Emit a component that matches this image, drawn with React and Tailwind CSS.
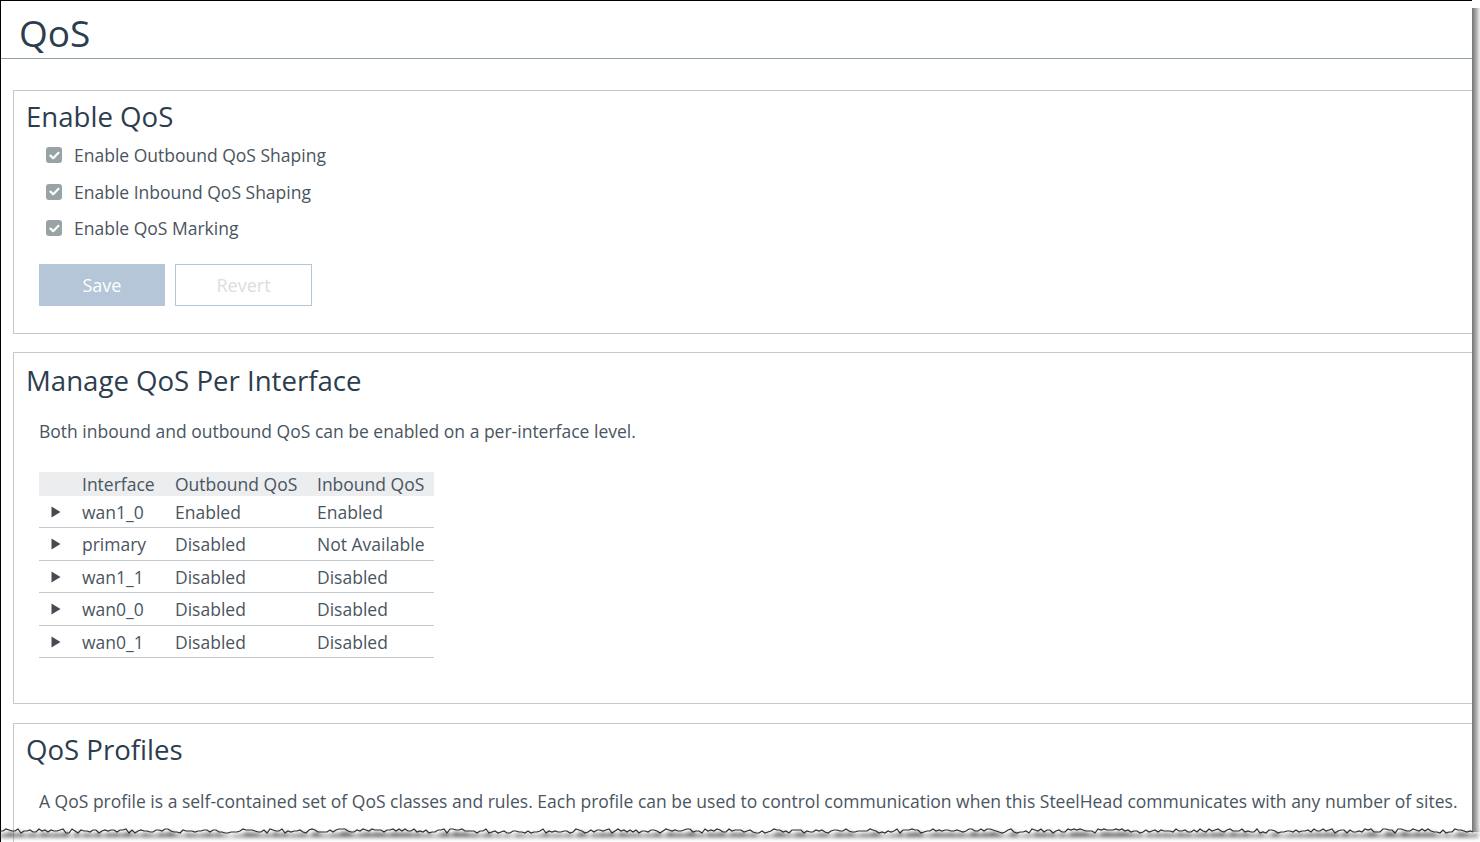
import React from 'react';

const font = { fontFamily: '"Open Sans", "Noto Sans", sans-serif' };

const rows = [
  ['wan1_0', 'Enabled', 'Enabled'],
  ['primary', 'Disabled', 'Not Available'],
  ['wan1_1', 'Disabled', 'Disabled'],
  ['wan0_0', 'Disabled', 'Disabled'],
  ['wan0_1', 'Disabled', 'Disabled'],
];

// jagged "torn paper" edge along the bottom
const tornPoints = (() => {
  let s = 7;
  const rnd = () => {
    s = (s * 9301 + 49297) % 233280;
    return s / 233280;
  };
  const pts = [];
  for (let x = 0; x <= 1474; x += 3) {
    pts.push([x, 9 + Math.round((rnd() - 0.5) * 4)]);
  }
  return pts;
})();

const Checkbox = () => (
  <span className="w-4 h-4 rounded-[3px] bg-[#97a3a5] flex items-center justify-center shrink-0">
    <svg width="11" height="9" viewBox="0 0 11 9" fill="none">
      <path d="M1.5 4.6 L4.2 7.2 L9.5 1.8" stroke="white" strokeWidth="2.2" strokeLinecap="round" strokeLinejoin="round" />
    </svg>
  </span>
);

const Arrow = () => (
  <svg width="10" height="12" viewBox="0 0 10 12">
    <path d="M0.5 0.5 L9.5 6 L0.5 11.5 Z" fill="#464b51" />
  </svg>
);

const Section = ({ title, children, className = '' }) => (
  <div className={`ml-3 -mr-4 border border-[#c3c8c8] ${className}`}>
    <h2 className="pl-3 text-[27.6px] leading-[38px] text-[#2c3d4e]">{title}</h2>
    {children}
  </div>
);

export default function App() {
  const torn = tornPoints.map(([x, y]) => `${x},${y}`).join(' ');
  return (
    <div className="w-[1480px] h-[842px] bg-white relative overflow-hidden text-[#4a5560]" style={font}>
      <div className="flex">
        <div className="w-[1472px] h-[842px] border-l border-t border-black overflow-hidden bg-white">
          <div className="h-[58px] border-b border-[#8fa29e] pl-[18px] pt-[7px]">
            <h1 className="text-[37px] leading-[49px] text-[#2c3d4e]">QoS</h1>
          </div>

          <Section title="Enable QoS" className="mt-[31px] pt-[6px] pb-[27px]">
            <div className="pl-[32px] pt-[2px]">
              {['Enable Outbound QoS Shaping', 'Enable Inbound QoS Shaping', 'Enable QoS Marking'].map((t) => (
                <div key={t} className="h-[36.5px] flex items-center gap-[12px] text-[17.5px]">
                  <Checkbox />
                  <span>{t}</span>
                </div>
              ))}
            </div>
            <div className="flex gap-[10px] pl-[25px] mt-[17px]">
              <button className="w-[126px] h-[42px] pt-[2px] bg-[#b4c6d7] text-white text-[18px]">Save</button>
              <button className="w-[137px] h-[42px] pt-[2px] border border-[#b4c6d7] text-[#d9dee1] text-[18px]">Revert</button>
            </div>
          </Section>

          <Section title="Manage QoS Per Interface" className="mt-[18px] pt-[8px] pb-[45px]">
            <p className="pl-[25px] mt-[20px] text-[17.5px] leading-6">
              Both inbound and outbound QoS can be enabled on a per-interface level.
            </p>
            <div className="ml-[25px] mt-[29px] w-[395px] text-[17.5px]">
              <div className="grid grid-cols-[43px_93px_142px_117px] h-6 items-center bg-[#ebedef] leading-6">
                <span />
                <span>Interface</span>
                <span>Outbound QoS</span>
                <span>Inbound QoS</span>
              </div>
              {rows.map(([a, b, c]) => (
                <div key={a} className="grid grid-cols-[43px_93px_142px_117px] h-[32.5px] pt-[1px] items-center border-b border-[#c4c9ce]">
                  <span className="pl-[12px] flex items-center"><Arrow /></span>
                  <span>{a}</span>
                  <span>{b}</span>
                  <span>{c}</span>
                </div>
              ))}
            </div>
          </Section>

          <Section title="QoS Profiles" className="mt-[19px] pt-[6px] pb-10">
            <p className="pl-[25px] mt-[21px] text-[17.5px] leading-6 whitespace-nowrap">
              A QoS profile is a self-contained set of QoS classes and rules. Each profile can be used to control communication when this SteelHead communicates with any number of sites.
            </p>
          </Section>
        </div>
        <div className="w-2 mt-2 h-[824px] bg-linear-to-r from-[#747474] via-[#a8a8a8] to-[#f0f0f0]" />
      </div>

      <svg className="absolute left-0 bottom-0" width="1480" height="20" viewBox="0 0 1480 20">
        <defs>
          <filter id="blur" x="-1%" y="-100%" width="102%" height="300%">
            <feGaussianBlur stdDeviation="2" />
          </filter>
        </defs>
        <polygon points={`0,13 ${tornPoints.map(([x, y]) => `${x + 4},${y + 3}`).join(' ')} 1478,7 1478,15 0,15`} fill="#5a5a5a" filter="url(#blur)" />
        <polygon points={`0,0 ${torn} 1474,0`} fill="white" opacity="0" />
        <polyline points={torn} fill="none" stroke="#2e2e2e" strokeWidth="1.2" />
      </svg>
    </div>
  );
}
